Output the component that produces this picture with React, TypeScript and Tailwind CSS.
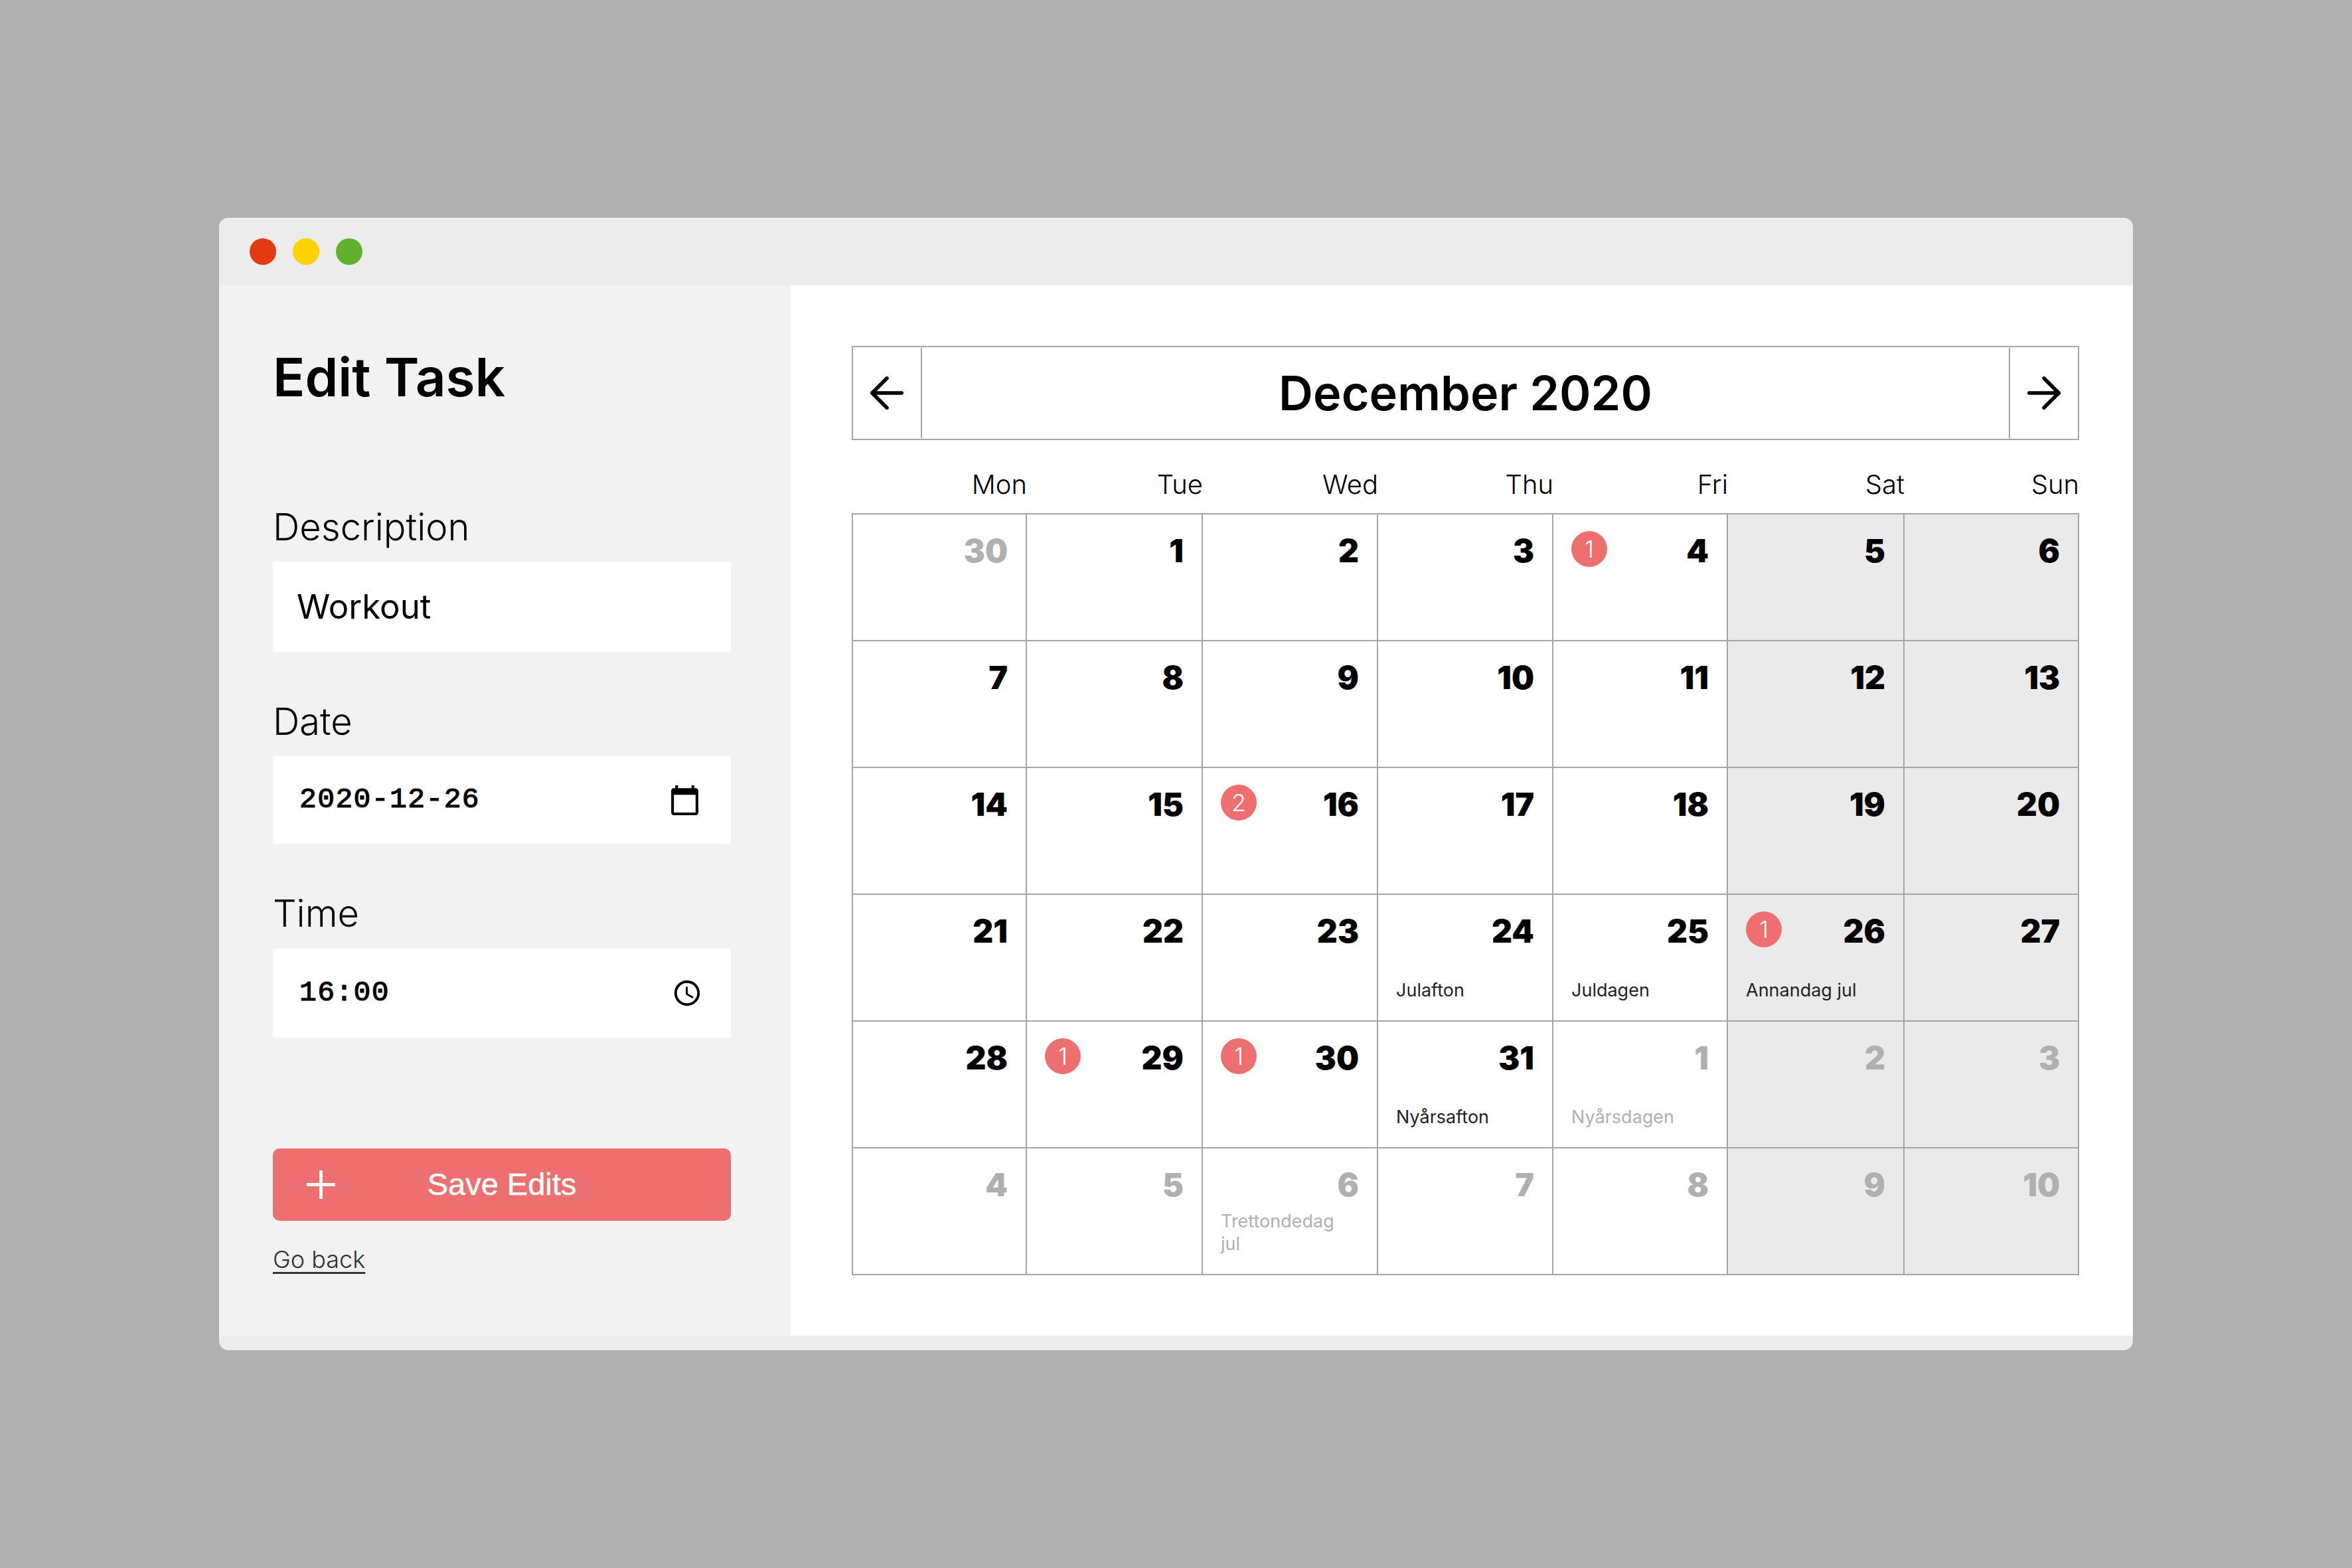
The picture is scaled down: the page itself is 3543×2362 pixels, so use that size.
import { ArrowLeft, ArrowRight } from 'lucide-react'
import { MdAccessTime, MdCalendarToday } from 'react-icons/md'

type Day = {
  n: number
  muted?: boolean
  badge?: number
  label?: string
}

const weekdays = ['Mon', 'Tue', 'Wed', 'Thu', 'Fri', 'Sat', 'Sun']

const days: Day[] = [
  { n: 30, muted: true },
  { n: 1 },
  { n: 2 },
  { n: 3 },
  { n: 4, badge: 1 },
  { n: 5 },
  { n: 6 },
  { n: 7 },
  { n: 8 },
  { n: 9 },
  { n: 10 },
  { n: 11 },
  { n: 12 },
  { n: 13 },
  { n: 14 },
  { n: 15 },
  { n: 16, badge: 2 },
  { n: 17 },
  { n: 18 },
  { n: 19 },
  { n: 20 },
  { n: 21 },
  { n: 22 },
  { n: 23 },
  { n: 24, label: 'Julafton' },
  { n: 25, label: 'Juldagen' },
  { n: 26, badge: 1, label: 'Annandag jul' },
  { n: 27 },
  { n: 28 },
  { n: 29, badge: 1 },
  { n: 30, badge: 1 },
  { n: 31, label: 'Nyårsafton' },
  { n: 1, muted: true, label: 'Nyårsdagen' },
  { n: 2, muted: true },
  { n: 3, muted: true },
  { n: 4, muted: true },
  { n: 5, muted: true },
  { n: 6, muted: true, label: 'Trettondedag jul' },
  { n: 7, muted: true },
  { n: 8, muted: true },
  { n: 9, muted: true },
  { n: 10, muted: true },
]

function DayCell({ day, weekend }: { day: Day; weekend: boolean }) {
  return (
    <div className={`flex h-[191px] flex-col border-r-2 border-b-2 border-[#a5a5a5] pt-[25px] pr-[27px] pb-[28px] pl-[27px] ${weekend ? 'bg-[#eaeaea]' : 'bg-white'}`}>
      <div className="flex items-start justify-between">
        {day.badge ? (
          <span className="flex h-[54px] w-[54px] items-center justify-center rounded-full bg-[#ee6f70] text-[36px] leading-none font-light text-white">{day.badge}</span>
        ) : (
          <span />
        )}
        <span className={`mt-[6px] text-[48px] leading-none font-black ${day.muted ? 'text-[#b0b0b0]' : 'text-black'}`}>{day.n}</span>
      </div>
      {day.label && (
        <p className={`mt-auto max-w-[190px] text-[27px] leading-[34px] ${day.muted ? 'text-[#b0b0b0]' : 'text-[#222]'}`}>{day.label}</p>
      )}
    </div>
  )
}

export default function App() {
  return (
    <div className="flex h-[2362px] w-[3543px] items-center justify-center bg-[#b0b0b0] font-['Inter',sans-serif]">
      <div className="flex h-[1706px] w-[2883px] flex-col overflow-hidden rounded-[14px] bg-[#ececec]">
        <div className="flex h-[102px] items-center gap-[25px] pl-[46px]">
          <span className="h-[40px] w-[40px] rounded-full bg-[#e23b13]" />
          <span className="h-[40px] w-[40px] rounded-full bg-[#ffd200]" />
          <span className="h-[40px] w-[40px] rounded-full bg-[#61b02e]" />
        </div>

        <div className="flex h-[1582px]">
          <aside className="w-[861px] bg-[#f2f2f2] pt-[98px] pl-[81px]">
            <h1 className="text-[80px] leading-none font-semibold text-black">Edit Task</h1>

            <label className="mt-[158px] block text-[56px] leading-none font-light text-black">Description</label>
            <div className="mt-[24px] flex h-[136px] w-[690px] items-center bg-white pl-[36px] text-[51px] text-black">Workout</div>

            <label className="mt-[77px] block text-[56px] leading-none font-light text-black">Date</label>
            <div className="mt-[24px] flex h-[132px] w-[690px] items-center justify-between bg-white pr-[45px] pl-[40px]">
              <span className="font-['Liberation_Mono',monospace] text-[43px] tracking-[1.4px] text-black [-webkit-text-stroke:1.2px_black]">2020-12-26</span>
              <MdCalendarToday size={49} className="text-black" />
            </div>

            <label className="mt-[77px] block text-[56px] leading-none font-light text-black">Time</label>
            <div className="mt-[25px] flex h-[134px] w-[690px] items-center justify-between bg-white pr-[43px] pl-[40px]">
              <span className="font-['Liberation_Mono',monospace] text-[43px] tracking-[1.4px] text-black [-webkit-text-stroke:1.2px_black]">16:00</span>
              <MdAccessTime size={46} className="text-black" />
            </div>

            <button className="relative mt-[167px] flex h-[109px] w-[690px] items-center justify-center rounded-[10px] bg-[#ee6f70] font-['Liberation_Sans',sans-serif] text-[47px] text-white [-webkit-text-stroke:0.5px_white]">
              <svg className="absolute left-[51px]" width="43" height="43" viewBox="0 0 43 43" fill="none" stroke="white" strokeWidth="5">
                <path d="M21.5 0v43M0 21.5h43" />
              </svg>
              Save Edits
            </button>

            <a className="mt-[40px] block w-fit text-[36px] leading-none font-light text-[#333] underline underline-offset-[6px]">Go back</a>
          </aside>

          <main className="flex-1 bg-white pt-[91px] pr-[81px] pl-[92px]">
            <div className="flex h-[142px] items-center border-2 border-[#a5a5a5]">
              <div className="flex h-[136px] w-[104px] items-center justify-center border-r-2 border-[#a5a5a5]">
                <ArrowLeft size={76} strokeWidth={1.75} className="text-black" />
              </div>
              <h2 className="flex-1 text-center text-[72px] font-semibold text-black">December 2020</h2>
              <div className="flex h-[136px] w-[104px] items-center justify-center border-l-2 border-[#a5a5a5]">
                <ArrowRight size={76} strokeWidth={1.75} className="text-black" />
              </div>
            </div>

            <div className="mt-[42px] mb-[18px] grid grid-cols-[262px_265px_264px_264px_263px_266px_1fr] pl-[2px]">
              {weekdays.map((d) => (
                <div key={d} className="text-right text-[40px] leading-[50px] font-light text-black">{d}</div>
              ))}
            </div>

            <div className="grid grid-cols-[262px_265px_264px_264px_263px_266px_1fr] border-t-2 border-l-2 border-[#a5a5a5]">
              {days.map((day, i) => (
                <DayCell key={i} day={day} weekend={i % 7 >= 5} />
              ))}
            </div>
          </main>
        </div>
      </div>
    </div>
  )
}
